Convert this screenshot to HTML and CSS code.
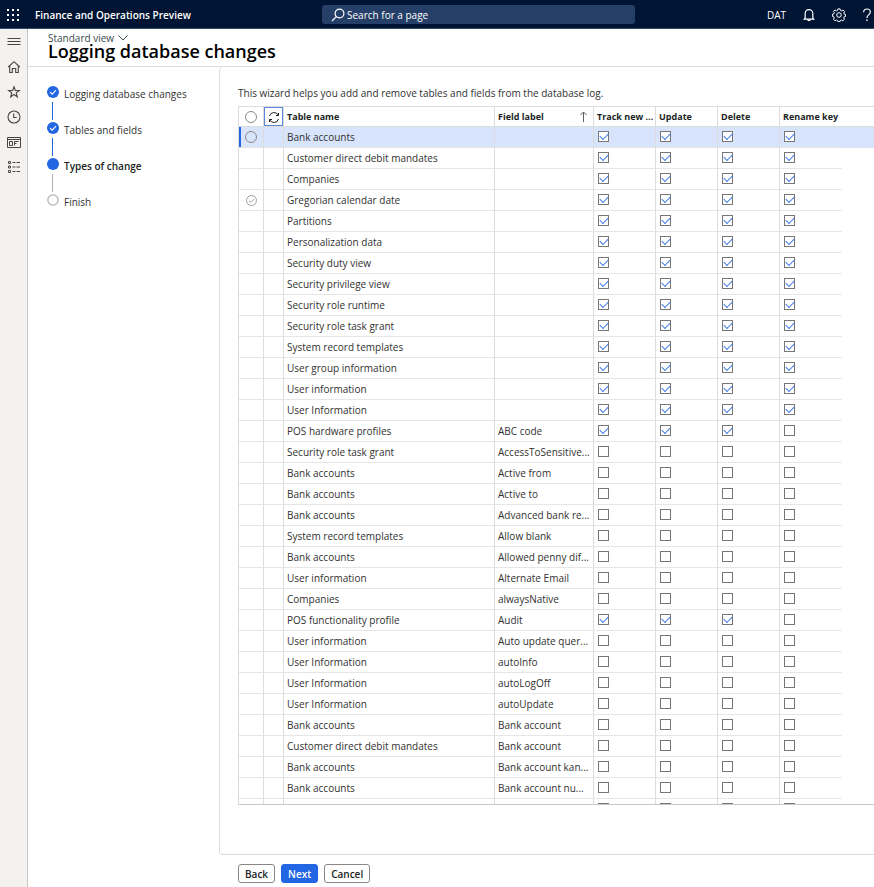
FILE: index.html
```html
<!DOCTYPE html>
<html lang="en">
<head>
<meta charset="utf-8">
<meta name="viewport" content="width=device-width, initial-scale=1">
<title>Logging database changes</title>
<link rel="stylesheet" href="styles.css">
</head>
<body>
<header class="topbar">
  <button class="icon-btn waffle" aria-label="App launcher">
    <svg width="14" height="14" viewBox="0 0 14 14" fill="currentColor"><path d="M1 1h2v2H1zM6 1h2v2H6zM11 1h2v2h-2zM1 6h2v2H1zM6 6h2v2H6zM11 6h2v2h-2zM1 11h2v2H1zM6 11h2v2H6zM11 11h2v2h-2z"/></svg>
  </button>
  <a class="brand" href="#">Finance and Operations Preview</a>
  <div class="search">
    <svg width="14" height="14" viewBox="0 0 14 14" fill="none" stroke="currentColor" stroke-width="1.2"><circle cx="8.5" cy="5.5" r="4.4"/><path d="M5.3 8.700 1 13"/></svg>
    <input type="text" placeholder="Search for a page" aria-label="Search for a page">
  </div>
  <div class="tools">
    <button class="company">DAT</button>
    <button class="icon-btn" aria-label="Notifications">
      <svg width="14" height="14" viewBox="0 0 14 14" fill="none" stroke="currentColor" stroke-width="1.2"><path d="M3.2 10V5.400a3.800 3.800 0 0 1 7.600 0V10l.9 1.100H2.300z"/><path d="M5.400 11.400a1.700 1.700 0 0 0 3.200 0"/></svg>
    </button>
    <button class="icon-btn" aria-label="Settings">
      <svg width="14" height="14" viewBox="0 0 14 14" fill="none" stroke="currentColor" stroke-linejoin="round"><path d="M5.900.900h2.200l.4 1.500 1.100.5 1.400-.8 1.600 1.500-.8 1.400.4 1.100 1.200.2v2.200l-1.300.3-.4 1.100.8 1.400-1.600 1.500-1.400-.8-1.100.4-.4 1.200H5.900l-.4-1.200-1.100-.4-1.400.8-1.500-1.500.8-1.400-.5-1.100-1.200-.3V6.100l1.200-.3.5-1.100-.8-1.300L3 1.900l1.400.9 1.100-.4z"/><circle cx="7" cy="7" r="2.300"/></svg>
    </button>
    <button class="icon-btn" aria-label="Help">
      <svg width="10" height="14" viewBox="0 0 10 14" fill="none" stroke="currentColor" stroke-width="1.200"><path d="M1.600 4.200C1.600 2.200 3 1 4.900 1s3.400 1.100 3.400 3c0 2.900-3.400 2.900-3.400 6"/><path d="M4.900 11.600v1.400" stroke-width="1.400"/></svg>
    </button>
  </div>
</header>
<div class="shell">
  <nav class="rail" aria-label="Main">
    <button class="icon-btn" aria-label="Expand the navigation pane"><svg width="14" height="14" viewBox="0 0 14 14" fill="none" stroke="currentColor"><path d="M.5 3.500h13M.5 6.500h13M.5 9.500h13"/></svg></button>
    <a class="icon-btn" href="#" aria-label="Home"><svg width="14" height="14" viewBox="0 0 14 14" fill="none" stroke="currentColor" stroke-width="1.100"><path d="M1.200 7 7 1.700 12.800 7M2.700 6v6.500h2.600v-4h3.400v4h2.600V6"/></svg></a>
    <a class="icon-btn" href="#" aria-label="Favorites"><svg width="14" height="14" viewBox="0 0 14 14" fill="none" stroke="currentColor" stroke-width="1.100"><path d="m7 1.800 1.300 3.700h4L9.200 7.900l1.100 4L7 9.500l-3.300 2.400 1.100-4-3.100-2.400h4z"/></svg></a>
    <a class="icon-btn" href="#" aria-label="Recent"><svg width="14" height="14" viewBox="0 0 14 14" fill="none" stroke="currentColor" stroke-width="1.100"><circle cx="7" cy="7" r="6"/><path d="M6.700 3.500v4h3"/></svg></a>
    <a class="icon-btn" href="#" aria-label="Workspaces"><svg width="14" height="14" viewBox="0 0 14 14" fill="none" stroke="currentColor"><path d="M.5 2.500h13v10H.5zM.5 4.500h13M2.500 6.500h3v4h-3zM7.500 10.500v-4h4M7.500 8.500h2"/></svg></a>
    <a class="icon-btn" href="#" aria-label="Modules"><svg width="14" height="14" viewBox="0 0 14 14" fill="none" stroke="currentColor"><path d="M1.500 1.500h2v2h-2zM1.500 6h2v2h-2zM1.500 10.500h2v2h-2z"/><path d="M5.500 2.500h3M9.500 2.500h3.500M5.500 7h3M9.500 7h3.500M5.500 11.500h3M9.500 11.500h3.500"/></svg></a>
  </nav>
  <main class="page">
    <div class="page-head">
      <button class="view">Standard view <svg width="10" height="6" viewBox="0 0 10 6" fill="none" stroke="currentColor"><path d="m.5.500 4.500 4.500L9.500.500"/></svg></button>
      <h1>Logging database changes</h1>
    </div>
    <div class="wizard">
      <ol class="steps">
        <li class="done"><svg width="12" height="12" viewBox="0 0 12 12"><circle cx="6" cy="6" r="6" fill="#2266e3"/><path d="m3 6.200 2.200 2L9 4.200" fill="none" stroke="#fff" stroke-width="1.100"/></svg><a href="#">Logging database changes</a></li>
        <li class="done"><svg width="12" height="12" viewBox="0 0 12 12"><circle cx="6" cy="6" r="6" fill="#2266e3"/><path d="m3 6.200 2.200 2L9 4.200" fill="none" stroke="#fff" stroke-width="1.100"/></svg><a href="#">Tables and fields</a></li>
        <li class="current" aria-current="step"><svg width="12" height="12" viewBox="0 0 12 12"><circle cx="6" cy="6" r="6" fill="#2266e3"/></svg><a href="#">Types of change</a></li>
        <li><svg width="12" height="12" viewBox="0 0 12 12"><circle cx="6" cy="6" r="5.200" fill="#fff" stroke="#b3b0ad" stroke-width="1.200"/></svg><a href="#">Finish</a></li>
      </ol>
      <div class="stage">
        <section class="panel">
          <p class="intro">This wizard helps you add and remove tables and fields from the database log.</p>
          <div class="grid-wrap">
            <table class="grid">
              <colgroup><col class="c-mark"><col class="c-refresh"><col class="c-name"><col class="c-field"><col class="c-check"><col class="c-check"><col class="c-check"><col class="c-check"><col></colgroup>
              <thead>
                <tr>
                  <th><input type="radio" class="mark" name="all" aria-label="Select all rows"></th>
                  <th><button class="refresh" aria-label="Refresh"><svg width="12" height="12" viewBox="0 0 12 12" fill="none" stroke="currentColor"><path d="M1.500 5a4.700 4.700 0 0 1 8.700-1M10.500 8a4.700 4.700 0 0 1-8.700 1M10.500 2v2.500H8M1.500 11V8.500H4"/></svg></button></th>
                  <th scope="col">Table name</th>
                  <th scope="col"><div class="sorted"><span>Field label</span><svg width="7" height="11" viewBox="0 0 7 11" fill="none" stroke="currentColor"><path d="M3.500 11V1M.5 4l3-3 3 3"/></svg></div></th>
                  <th scope="col">Track new ...</th>
                  <th scope="col">Update</th>
                  <th scope="col">Delete</th>
                  <th scope="col">Rename key</th>
                  <td></td>
                </tr>
              </thead>
              <tbody id="rows"></tbody>
            </table>
          </div>
        </section>
        <footer class="actions">
          <button class="btn">Back</button>
          <button class="btn primary">Next</button>
          <button class="btn">Cancel</button>
        </footer>
      </div>
    </div>
  </main>
</div>
<script src="script.js"></script>
</body>
</html>
```
FILE: styles.css
```css
* { box-sizing: border-box; }

body {
  margin: 0;
  height: 100vh;
  display: flex;
  flex-direction: column;
  overflow: hidden;
  background: #fff;
  color: #323130;
  font: 10px/16px "Segoe UI", "Open Sans", "Noto Sans", sans-serif;
}

button, input { font: inherit; color: inherit; }
button { padding: 0; border: 0; background: none; }
a { color: inherit; text-decoration: none; }
svg { display: block; flex: none; }

.icon-btn { display: flex; align-items: center; justify-content: center; }

/* Top bar */
.topbar {
  display: flex;
  align-items: center;
  flex: none;
  height: 29px;
  padding: 1px 0 0 6px;
  background: #001433;
  border-bottom: 1px solid #38486a;
  color: #fff;
}
.brand { width: 287px; margin-left: 15px; font-weight: 600; }
.search {
  display: flex;
  align-items: center;
  gap: 2px;
  flex: 0 1 313px;
  height: 19px;
  padding: 0 9px;
  background: #263f68;
  border-radius: 3px;
}
.search input { flex: 1; min-width: 0; padding: 0; border: 0; outline: 0; background: none; }
.search input::placeholder { color: #fff; opacity: 1; }
.tools { display: flex; align-items: center; gap: 16px; margin-left: auto; margin-right: 2px; }

/* Shell */
.shell { display: flex; flex: 1; min-height: 0; }
.rail {
  display: flex;
  flex-direction: column;
  flex: none;
  width: 28px;
  background: #f3f2f1;
  border-right: 1px solid #c8c6c4;
  color: #484644;
}
.rail .icon-btn { height: 25px; }
.page { display: flex; flex-direction: column; flex: 1; min-width: 0; }
.page-head { flex: none; height: 38px; padding: 2px 20px 0; border-bottom: 1px solid #dcdcdc; }
.view { display: flex; align-items: center; gap: 4px; height: 14px; color: #3b4a4a; }
h1 { margin: 0; font-size: 18px; line-height: 13px; font-weight: 600; color: #000; }

/* Wizard steps */
.wizard { display: flex; flex: 1; min-height: 0; }
.steps { flex: none; width: 191px; margin: 0; padding: 19px 0 0 19px; list-style: none; }
.steps li { position: relative; display: flex; gap: 5px; height: 36px; }
.steps li:not(:last-child)::after {
  content: "";
  position: absolute;
  left: 5px;
  top: 16px;
  width: 1px;
  height: 18px;
  background: #b3b0ad;
}
.steps li.done::after { background: #2266e3; }
.steps .current { font-weight: 600; color: #201f1e; }

/* Panel */
.stage { display: flex; flex-direction: column; flex: 1; min-width: 0; }
.panel {
  display: flex;
  flex-direction: column;
  flex: 1;
  min-height: 0;
  padding: 18px 0 49px 18px;
  border: solid #dcdcdc;
  border-width: 0 0 1px 1px;
  border-radius: 4px 0 0 4px;
}
.intro { margin: 0 0 5px; }
.grid-wrap {
  flex: 1;
  min-height: 0;
  overflow: hidden;
  border: solid #dcdcdc;
  border-width: 1px 0 1px 1px;
  border-bottom-color: #c8c8c8;
}

.grid { width: 100%; table-layout: fixed; border-collapse: separate; border-spacing: 0; }
.c-mark { width: 25px; }
.c-refresh { width: 20px; }
.c-name { width: 211px; }
.c-field { width: 99px; }
.c-check { width: 62px; }
.grid th, .grid td {
  height: 21px;
  padding: 0 3px;
  border: solid #e6e6e6;
  border-width: 0 1px 1px 0;
  text-align: left;
  white-space: nowrap;
}
.grid td { border-right-color: #dcdcdc; }
.grid th { height: 20px; font-size: 9px; font-weight: 700; color: #201f1e; border-color: #dcdcdc; }
.grid th:nth-child(-n+2), .grid td:nth-child(-n+2) { padding: 0; }
.grid th:nth-child(8), .grid td:nth-child(8), .grid td:last-child { border-right: 0; }
.grid tbody td:last-child { border-bottom: 0; }
.grid thead td { height: 20px; border-color: #dcdcdc; }
.selected td { background: #d8e4fb; }
.selected td:first-child { box-shadow: inset 2px 0 #2266e3; }

.mark {
  appearance: none;
  display: block;
  width: 12px;
  height: 12px;
  margin: 0 auto;
  border: 1px solid #8a8886;
  border-radius: 50%;
}
.row-mark { margin: 0 auto; color: #a19f9d; }
.refresh {
  display: flex;
  align-items: center;
  justify-content: center;
  width: 100%;
  height: 19px;
  border: 1px solid #5b86dc;
}
.sorted { display: flex; align-items: center; justify-content: space-between; padding-right: 3px; }
.sorted svg { color: #605e5c; }

.tick {
  appearance: none;
  display: block;
  width: 11px;
  height: 11px;
  margin: 0 0 1px 1px;
  border: 1px solid #767676;
  background: #fff;
}
.tick:checked::before {
  content: "";
  display: block;
  width: 7px;
  height: 4px;
  margin: 1px;
  border: solid #3b78e7;
  border-width: 0 0 1px 1px;
  transform: rotate(-45deg);
}

/* Footer */
.actions { display: flex; align-items: center; gap: 6px; flex: none; height: 32px; padding: 5px 0 0 19px; }
.btn {
  height: 19px;
  padding: 0 6px;
  border: 1px solid #8a8886;
  border-radius: 3px;
  background: #fff;
  color: #201f1e;
  font-weight: 600;
  line-height: 16px;
}
.btn.primary { background: #2266e3; border-color: #2266e3; color: #fff; }
```
FILE: script.js
```js
// Each row: table name, field label, one digit per check column.
const rows = [
  ["Bank accounts", "", "1111"],
  ["Customer direct debit mandates", "", "1111"],
  ["Companies", "", "1111"],
  ["Gregorian calendar date", "", "1111"],
  ["Partitions", "", "1111"],
  ["Personalization data", "", "1111"],
  ["Security duty view", "", "1111"],
  ["Security privilege view", "", "1111"],
  ["Security role runtime", "", "1111"],
  ["Security role task grant", "", "1111"],
  ["System record templates", "", "1111"],
  ["User group information", "", "1111"],
  ["User information", "", "1111"],
  ["User Information", "", "1111"],
  ["POS hardware profiles", "ABC code", "1110"],
  ["Security role task grant", "AccessToSensitive...", "0000"],
  ["Bank accounts", "Active from", "0000"],
  ["Bank accounts", "Active to", "0000"],
  ["Bank accounts", "Advanced bank re...", "0000"],
  ["System record templates", "Allow blank", "0000"],
  ["Bank accounts", "Allowed penny dif...", "0000"],
  ["User information", "Alternate Email", "0000"],
  ["Companies", "alwaysNative", "0000"],
  ["POS functionality profile", "Audit", "1110"],
  ["User information", "Auto update quer...", "0000"],
  ["User Information", "autoInfo", "0000"],
  ["User Information", "autoLogOff", "0000"],
  ["User Information", "autoUpdate", "0000"],
  ["Bank accounts", "Bank account", "0000"],
  ["Customer direct debit mandates", "Bank account", "0000"],
  ["Bank accounts", "Bank account kan...", "0000"],
  ["Bank accounts", "Bank account nu...", "0000"],
  ["", "", "0000"]
];
const columns = ["Track new", "Update", "Delete", "Rename key"];
const hoverMark = '<svg class="row-mark" width="11" height="11" viewBox="0 0 11 11" fill="none" stroke="currentColor"><circle cx="5.5" cy="5.5" r="5"/><path d="m3 5.700 1.800 1.700L8.200 4"/></svg>';

document.getElementById("rows").innerHTML = rows.map(([name, field, checks], i) => {
  const mark = i === 0 ? '<input type="radio" class="mark" name="row" aria-label="Select row">' : i === 3 ? hoverMark : "";
  const ticks = [...checks].map((c, k) =>
    `<td><input type="checkbox" class="tick" aria-label="${columns[k]}"${c === "1" ? " checked" : ""}></td>`).join("");
  return `<tr${i === 0 ? ' class="selected"' : ""}><td>${mark}</td><td></td><td>${name}</td><td>${field}</td>${ticks}<td></td></tr>`;
}).join("");
```
